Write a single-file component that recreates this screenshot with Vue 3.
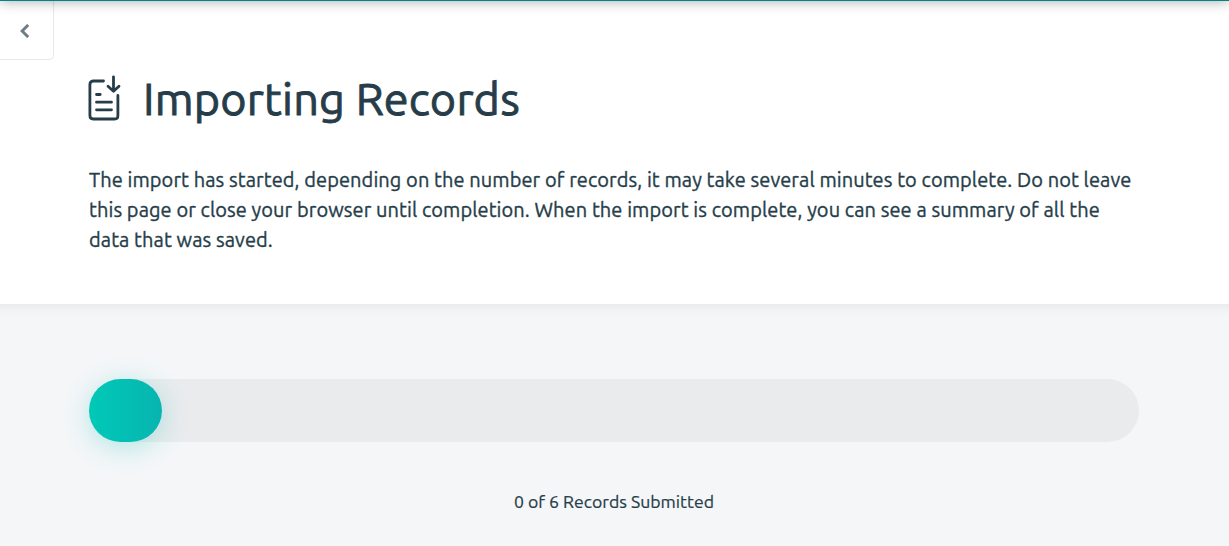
<script setup>
const lines = [
  'The import has started, depending on the number of records, it may take several minutes to complete. Do not leave',
  'this page or close your browser until completion. When the import is complete, you can see a summary of all the',
  'data that was saved.'
]
const progress = 6.95
</script>

<template>
  <div class="page">
    <div class="topbar"></div>
    <header class="intro">
      <button class="back" aria-label="Back">
        <svg width="10" height="14" viewBox="0 0 10 14"><path d="M8.2 0.9 2.1 7 8.2 13.1" /></svg>
      </button>
      <div class="heading">
        <svg class="icon" width="34" height="46" viewBox="0 0 34 46">
          <path d="M16.5 6H6.2C3.6 6 2.9 7.4 2.9 9.8V40.2C2.9 42.8 3.7 44 6.2 44H27.6C30.2 44 30.9 42.9 30.9 40.2V20.5" />
          <path d="M9.5 19.5H13.2M9.5 27.2H24.5M9.5 34.8H24.5" />
          <path d="M26.5 1.8V15.8M21 11.2 26.5 16.2 32 11.2" />
        </svg>
        <h1>Importing Records</h1>
      </div>
      <p class="text">
        <span v-for="(l, i) in lines" :key="i" class="line">{{ l }}</span>
      </p>
    </header>
    <main class="status">
      <div class="track"><div class="fill" :style="{ width: progress + '%' }"></div></div>
      <div class="caption">0 of 6 Records Submitted</div>
    </main>
  </div>
</template>

<style>
body { margin: 0; background: #fff; }
</style>

<style scoped>
.page {
  height: 546px;
  overflow: hidden;
  position: relative;
  font-family: Ubuntu, "Noto Sans", sans-serif;
  color: #263d49;
}
.topbar {
  position: absolute;
  top: -39px;
  left: 0;
  right: 0;
  height: 40px;
  background: #008489;
  box-shadow: 0 0 14px rgba(0, 0, 0, 0.35);
  z-index: 2;
}
.intro {
  box-sizing: border-box;
  height: 304px;
  background: #fff;
  box-shadow: 0 0 14px rgba(0, 0, 0, 0.09);
  position: relative;
  margin: 0 -20px;
  padding: 0 20px;
}
.back {
  display: flex;
  align-items: center;
  box-sizing: border-box;
  width: 54px;
  height: 60px;
  padding: 2px 0 0 19.5px;
  background: #fff;
  border: solid #e6e8e9;
  border-width: 0 1px 1px 0;
  border-radius: 0 0 5px 0;
}
.back path { fill: none; stroke: #6c7d84; stroke-width: 2.9; }
.heading {
  display: flex;
  height: 60px;
  margin: 10px 0 0 87px;
}
.icon { margin-top: 5px; flex: none; }
.icon path {
  fill: none;
  stroke: #263d49;
  stroke-width: 2.8;
  stroke-linecap: round;
  stroke-linejoin: round;
}
h1 {
  margin: -1px 0 0 22px;
  font-size: 45px;
  font-weight: 400;
  letter-spacing: 0.21px;
  line-height: 60px;
  white-space: nowrap;
  -webkit-text-stroke: 0.9px #263d49;
}
.text {
  margin: 35px 0 0 89px;
  font-size: 20px;
  line-height: 30px;
  letter-spacing: 0.09px;
  -webkit-text-stroke: 0.35px #263d49;
}
.line { display: block; white-space: nowrap; }
.status {
  height: 242px;
  box-sizing: border-box;
  padding: 75px 90px 0 89px;
  background: #f4f6f8;
}
.track { height: 63px; border-radius: 32px; background: #e9ebed; }
.fill {
  height: 100%;
  border-radius: 32px;
  background: linear-gradient(90deg, #00c9b7, #08b4b0);
  box-shadow: 0 5px 27px rgba(0, 190, 180, 0.28);
}
.caption {
  margin-top: 45px;
  text-align: center;
  font-size: 17.65px;
  line-height: 30px;
  -webkit-text-stroke: 0.2px #263d49;
}
</style>
